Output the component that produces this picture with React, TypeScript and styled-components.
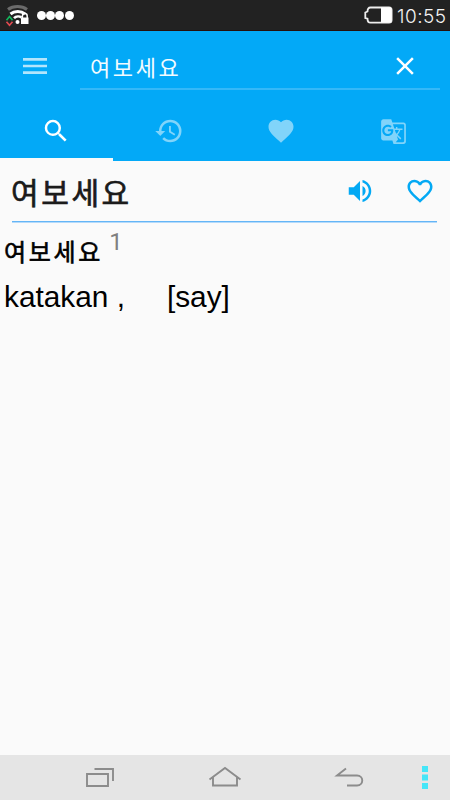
import React, { useState, ChangeEvent } from "react";
import styled, { createGlobalStyle } from "styled-components";
import {
  MdClose,
  MdFavorite,
  MdFavoriteBorder,
  MdGTranslate,
  MdHistory,
  MdMenu,
  MdSearch,
  MdVolumeUp,
} from "react-icons/md";

const GlobalStyle = createGlobalStyle`
  * {
    box-sizing: border-box;
  }

  body {
    margin: 0;
    background-color: #fafafa;
    font-family: "Liberation Sans", "Noto Sans CJK KR", sans-serif;
  }
`;

const Screen = styled.div`
  display: flex;
  flex-direction: column;
  width: 450px;
  height: 800px;
  overflow: hidden;
  background-color: #fafafa;
`;

const StatusBar = styled.div`
  display: flex;
  align-items: center;
  height: 31px;
  padding: 0 1px 0 5px;
  background-color: #222222;
  border-bottom: 1px solid #260f0b;
`;

const Dots = styled.div`
  display: flex;
  gap: 0.2px;
  margin-left: 7px;
  flex: 1;
`;

const Dot = styled.span`
  width: 9px;
  height: 9px;
  border-radius: 50%;
  background-color: #ffffff;
`;

const Clock = styled.span`
  width: 52px;
  margin-left: 4px;
  color: #f2f2f2;
  font-family: Inter, "Liberation Sans", sans-serif;
  font-size: 19px;
  font-weight: 300;
  letter-spacing: 0.5px;
  line-height: 30px;
  padding-top: 3px;
  white-space: nowrap;
`;

const Header = styled.header`
  height: 130px;
  background-color: #03a9f7;
`;

const SearchRow = styled.div`
  display: flex;
  height: 70px;
  padding-right: 10px;
`;

const IconButton = styled.button<{ $width: number; $color: string }>`
  display: flex;
  align-items: center;
  justify-content: center;
  flex-shrink: 0;
  width: ${(props) => props.$width}px;
  height: 70px;
  padding: 0;
  border: none;
  background: none;
  color: ${(props) => props.$color};
  cursor: pointer;
`;

const SearchField = styled.div`
  display: flex;
  flex: 1;
  min-width: 0;
  height: 59px;
  margin-left: 10px;
  border-bottom: 2px solid #35b8f8;
`;

const SearchInput = styled.input`
  flex: 1;
  min-width: 0;
  height: 57px;
  padding: 12px 0 0 10px;
  border: none;
  outline: none;
  background: none;
  color: #f2fbff;
  font-family: "Noto Sans CJK KR", sans-serif;
  font-size: 22px;
  font-weight: 400;
  letter-spacing: 2.6px;
`;

const Tabs = styled.nav`
  display: grid;
  grid-template-columns: repeat(4, 1fr);
  height: 60px;
`;

const Tab = styled.button<{ $active: boolean }>`
  display: flex;
  align-items: center;
  justify-content: center;
  padding: 3px 0 0;
  border: none;
  border-bottom: 3px solid ${(props) => (props.$active ? "#fafafa" : "#03a9f7")};
  background: none;
  color: ${(props) => (props.$active ? "#ffffff" : "#81d4fa")};
  cursor: pointer;
`;

const Content = styled.main`
  flex: 1;
`;

const WordHeader = styled.div`
  display: flex;
  align-items: center;
  height: 61px;
  margin: 0 13px 0 12px;
  border-bottom: 1px solid #64b5f6;
  box-shadow: 0 1px 0 #b5dafa;
`;

const Word = styled.h1`
  flex: 1;
  margin: 0 0 0 -1px;
  color: #1b1b1b;
  font-family: "Noto Sans CJK KR", sans-serif;
  font-size: 30px;
  font-weight: 400;
  letter-spacing: 2.6px;
  line-height: 60px;
  -webkit-text-stroke: 0.7px #1b1b1b;
`;

const Actions = styled.div`
  display: flex;
  margin-right: -13px;
`;

const Entry = styled.section`
  padding: 0 4px;
  color: #000000;
`;

const Headword = styled.div`
  display: flex;
  height: 59px;
  font-family: "Noto Sans CJK KR", sans-serif;
  font-size: 24px;
  font-weight: 400;
  letter-spacing: 2.7px;
  line-height: 58px;
  -webkit-text-stroke: 0.6px #000000;
`;

const Sense = styled.sup`
  margin-left: 6px;
  color: #808080;
  font-family: Roboto, "Liberation Sans", sans-serif;
  font-size: 24px;
  font-weight: 400;
  line-height: 41px;
  -webkit-text-stroke: 0;
`;

const Meaning = styled.p`
  display: flex;
  gap: 42px;
  margin: 0;
  font-size: 29.8px;
  line-height: 32px;
`;

const NavBar = styled.footer`
  display: flex;
  height: 45px;
  background-color: #e5e5e5;
`;

const NavIcon = styled.svg`
  display: block;
  width: 450px;
  height: 45px;
  fill: none;
  stroke: #8c8c8c;
  stroke-width: 1.9;
`;

const WifiIcon = () => (
  <svg width="25" height="24" viewBox="0 0 25 24" fill="none">
    <path d="M3 6.5C8 2.5 17 2.5 22 6.5" stroke="#6b6b6b" strokeWidth="3" />
    <path d="M5.5 11C9.5 7.5 16 7.5 20 11" stroke="#fff" strokeWidth="3" />
    <path d="M9 15.2c2.2-2.2 5.5-2.2 7.5-.6" stroke="#fff" strokeWidth="2.6" />
    <circle cx="12.5" cy="19" r="2" fill="#fff" />
    <path d="M1.5 17.2L4.5 13.5L7.5 17.2" stroke="#12b35a" strokeWidth="1.7" />
    <path d="M1.5 18.8L4.5 22.2L7.5 18.8" stroke="#e04a50" strokeWidth="1.7" />
    <path d="M17.4 15v-2.1a2.4 2.4 0 0 1 4.8 0V15" stroke="#fff" strokeWidth="1.5" />
    <rect x="16" y="14.5" width="7.5" height="6.500" fill="#fff" />
  </svg>
);

const BatteryIcon = () => (
  <svg width="29" height="18" viewBox="0 0 29 18" fill="none">
    <path
      d="M6.500 1.500H25a2.600 2.600 0 0 1 2.600 2.600v10a2.600 2.600 0 0 1-2.600 2.600H6.500Q3.500 16.700 3.500 12.700L1.300 12V6.500L3.500 5.500Q3.500 1.500 6.500 1.500Z"
      stroke="#eee"
      strokeWidth="1.800"
    />
    <path d="M17 1.500H26.500L27.500 3V15L26.500 16.500H17Z" fill="#fff" />
  </svg>
);

const tabs = [
  { name: "search", Icon: MdSearch, size: 30 },
  { name: "history", Icon: MdHistory, size: 30 },
  { name: "favorites", Icon: MdFavorite, size: 30 },
  { name: "translate", Icon: MdGTranslate, size: 27 },
];

const App: React.FC = () => {
  const [query, setQuery] = useState<string>("여보세요");
  const [activeTab, setActiveTab] = useState<string>("search");

  const handleQueryChange = (e: ChangeEvent<HTMLInputElement>) => {
    setQuery(e.target.value);
  };

  return (
    <Screen>
      <GlobalStyle />
      <StatusBar>
        <WifiIcon />
        <Dots>
          <Dot />
          <Dot />
          <Dot />
          <Dot />
        </Dots>
        <BatteryIcon />
        <Clock>10:55</Clock>
      </StatusBar>
      <Header>
        <SearchRow>
          <IconButton $width={70} $color="#b3e5fc">
            <MdMenu size={32} />
          </IconButton>
          <SearchField>
            <SearchInput type="text" value={query} onChange={handleQueryChange} />
            <IconButton $width={70} $color="#ffffff" onClick={() => setQuery("")}>
              <MdClose size={30} />
            </IconButton>
          </SearchField>
        </SearchRow>
        <Tabs>
          {tabs.map(({ name, Icon, size }) => (
            <Tab key={name} $active={name === activeTab} onClick={() => setActiveTab(name)}>
              <Icon size={size} />
            </Tab>
          ))}
        </Tabs>
      </Header>
      <Content>
        <WordHeader>
          <Word>여보세요</Word>
          <Actions>
            <IconButton $width={60} $color="#03a9f4">
              <MdVolumeUp size={30} />
            </IconButton>
            <IconButton $width={60} $color="#03a9f4">
              <MdFavoriteBorder size={30} />
            </IconButton>
          </Actions>
        </WordHeader>
        <Entry>
          <Headword>
            여보세요<Sense>1</Sense>
          </Headword>
          <Meaning>
            <span>katakan ,</span>
            <span>[say]</span>
          </Meaning>
        </Entry>
      </Content>
      <NavBar>
        {/* recent apps, home, back, overflow */}
        <NavIcon viewBox="0 0 450 45">
          <path d="M87 19H108V31H87ZM94.500 14H113V26" />
          <path d="M209.500 24.500L225 13L240.500 24.500M213 22.500V30.500H237V22.500" />
          <path d="M346 13.500L337 20.500H357C364 20.500 364 30.500 357 30.500H347" />
          <path d="M422 14H428M422 22.500H428M422 31H428" stroke="#45e6f8" strokeWidth="6" />
        </NavIcon>
      </NavBar>
    </Screen>
  );
};

export default App;
